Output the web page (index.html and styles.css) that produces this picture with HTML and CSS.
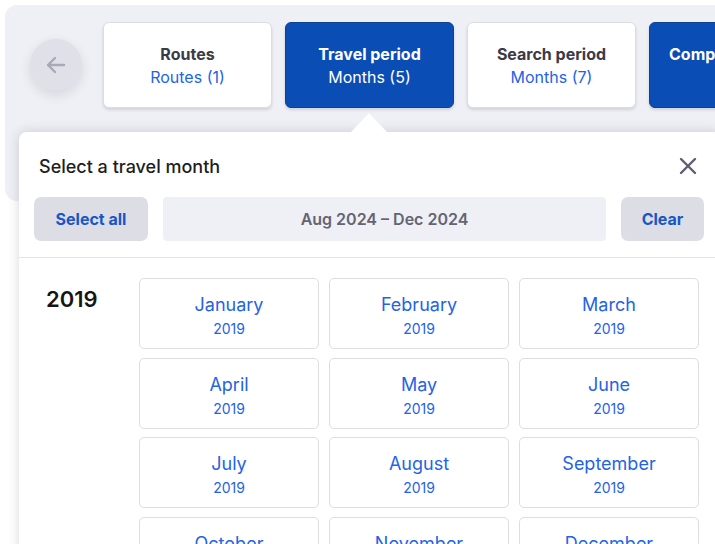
FILE: index.html
```html
<!DOCTYPE html>
<html lang="en">
<head>
<meta charset="utf-8">
<title>Select a travel month</title>
<link rel="stylesheet" href="styles.css">
</head>
<body>
<div class="page">
  <div class="panel">
    <div class="nav">
      <button class="back" aria-label="Back">
        <svg width="24" height="24" viewBox="0 0 24 24" fill="none" stroke="#a9a9b6" stroke-width="2.4" stroke-linecap="round" stroke-linejoin="round"><path d="M20 12H4.5"/><path d="M11 5l-7 7 7 7"/></svg>
      </button>
      <div class="tabs">
        <div class="tab"><div class="tab-title">Routes</div><div class="tab-sub">Routes (1)</div></div>
        <div class="tab active"><div class="tab-title">Travel period</div><div class="tab-sub">Months (5)</div></div>
        <div class="tab"><div class="tab-title">Search period</div><div class="tab-sub">Months (7)</div></div>
        <div class="tab active last"><div class="tab-title">Compare</div><div class="tab-sub">&nbsp;</div></div>
      </div>
    </div>
  </div>

  <div class="popover">
    <div class="pointer"></div>
    <div class="pop-head">
      <h2 class="pop-title">Select a travel month</h2>
      <button class="close" aria-label="Close">
        <svg width="20" height="20" viewBox="0 0 20 20" fill="none" stroke="#5f5f72" stroke-width="2.4" stroke-linecap="round"><path d="M3 3l14 14"/><path d="M17 3L3 17"/></svg>
      </button>
    </div>
    <div class="actions">
      <button class="btn btn-all">Select all</button>
      <div class="range">Aug 2024 – Dec 2024</div>
      <button class="btn btn-clear">Clear</button>
    </div>
    <div class="year-block">
      <div class="year">2019</div>
      <div class="grid">
        <div class="cell"><div class="m">January</div><div class="y">2019</div></div>
        <div class="cell"><div class="m">February</div><div class="y">2019</div></div>
        <div class="cell"><div class="m">March</div><div class="y">2019</div></div>
        <div class="cell"><div class="m">April</div><div class="y">2019</div></div>
        <div class="cell"><div class="m">May</div><div class="y">2019</div></div>
        <div class="cell"><div class="m">June</div><div class="y">2019</div></div>
        <div class="cell"><div class="m">July</div><div class="y">2019</div></div>
        <div class="cell"><div class="m">August</div><div class="y">2019</div></div>
        <div class="cell"><div class="m">September</div><div class="y">2019</div></div>
        <div class="cell"><div class="m">October</div><div class="y">2019</div></div>
        <div class="cell"><div class="m">November</div><div class="y">2019</div></div>
        <div class="cell"><div class="m">December</div><div class="y">2019</div></div>
      </div>
    </div>
  </div>
</div>
</body>
</html>
```

FILE: styles.css
```css
* { box-sizing: border-box; }
html, body {
  margin: 0;
  padding: 0;
  background: #ffffff;
  overflow: hidden;
  font-family: Inter, "Noto Sans", sans-serif;
}
.page {
  position: relative;
  width: 715px;
  height: 544px;
  overflow: hidden;
}
.panel {
  margin: 5px 0 0 5px;
  width: 740px;
  height: 196px;
  background: #eff0f5;
  border-radius: 12px;
  padding: 17px 0 0 25px;
}
.nav {
  display: flex;
  align-items: center;
  gap: 21px;
}
.back {
  flex: 0 0 52px;
  width: 52px;
  height: 52px;
  border-radius: 50%;
  border: none;
  background: #e0e0e8;
  box-shadow: 0 4px 12px rgba(37, 32, 60, 0.12);
  display: flex;
  align-items: center;
  justify-content: center;
  padding: 0;
}
.tabs {
  display: flex;
  gap: 13px;
  flex-shrink: 0;
}
.tab {
  flex: 0 0 169px;
  width: 169px;
  height: 86px;
  background: #ffffff;
  border-radius: 6px;
  border: 1px solid #dcdce4;
  box-shadow: 0 2px 3px rgba(37, 32, 60, 0.14);
  display: flex;
  flex-direction: column;
  align-items: center;
  padding-top: 20px;
  font-size: 16px;
  line-height: 23px;
}
.tab-title {
  font-weight: 700;
  color: #3b3a45;
}
.tab-sub {
  color: #2264e5;
}
.tab.active {
  background: #0a4db4;
  border-color: #0a4394;
}
.tab.active .tab-title,
.tab.active .tab-sub {
  color: #ffffff;
}
.tab.last {
  align-items: flex-start;
  padding-left: 19px;
}
.popover {
  position: absolute;
  left: 19px;
  top: 132px;
  width: 702px;
  height: 430px;
  background: #ffffff;
  border-radius: 8px 8px 0 0;
  box-shadow: 0 0 12px rgba(37, 32, 60, 0.18);
}
.pointer {
  position: absolute;
  left: 331px;
  top: -19px;
  width: 0;
  height: 0;
  border-left: 19px solid transparent;
  border-right: 19px solid transparent;
  border-bottom: 20px solid #ffffff;
}
.pop-head {
  display: flex;
  align-items: flex-start;
  justify-content: space-between;
  padding: 23px 23px 0 20px;
  height: 65px;
}
.pop-title {
  margin: 0;
  font-size: 18px;
  line-height: 24px;
  font-weight: 500;
  color: #1e1e24;
}
.close {
  border: none;
  background: none;
  padding: 0;
  width: 20px;
  height: 20px;
  display: flex;
  margin-top: 1px;
}
.actions {
  display: flex;
  gap: 15px;
  padding: 0 15px 16px 15px;
  border-bottom: 1px solid #e2e2ea;
}
.btn {
  height: 44px;
  padding: 0;
  border: none;
  border-radius: 7px;
  background: #dddde6;
  color: #1757c4;
  font-family: inherit;
  font-size: 16px;
  font-weight: 700;
}
.btn-all { flex: 0 0 114px; }
.btn-clear { flex: 0 0 83px; }
.range {
  flex: 0 0 443px;
  height: 44px;
  border-radius: 4px;
  background: #eff0f5;
  color: #646473;
  font-size: 16px;
  font-weight: 600;
  display: flex;
  align-items: center;
  justify-content: center;
}
.year-block {
  display: flex;
  padding: 20px 0 0 27px;
}
.year {
  width: 93px;
  font-size: 22px;
  line-height: 30px;
  font-weight: 600;
  color: #161616;
  padding-top: 6px;
}
.grid {
  display: grid;
  grid-template-columns: repeat(3, 180px);
  grid-auto-rows: 71px;
  column-gap: 10px;
  row-gap: 8.7px;
}
.cell {
  border: 1px solid #dddde5;
  border-radius: 5px;
  display: flex;
  flex-direction: column;
  align-items: center;
  padding-top: 14px;
  color: #2563e6;
}
.m {
  font-size: 18px;
  line-height: 24px;
}
.y {
  font-size: 14px;
  line-height: 24px;
}
```
